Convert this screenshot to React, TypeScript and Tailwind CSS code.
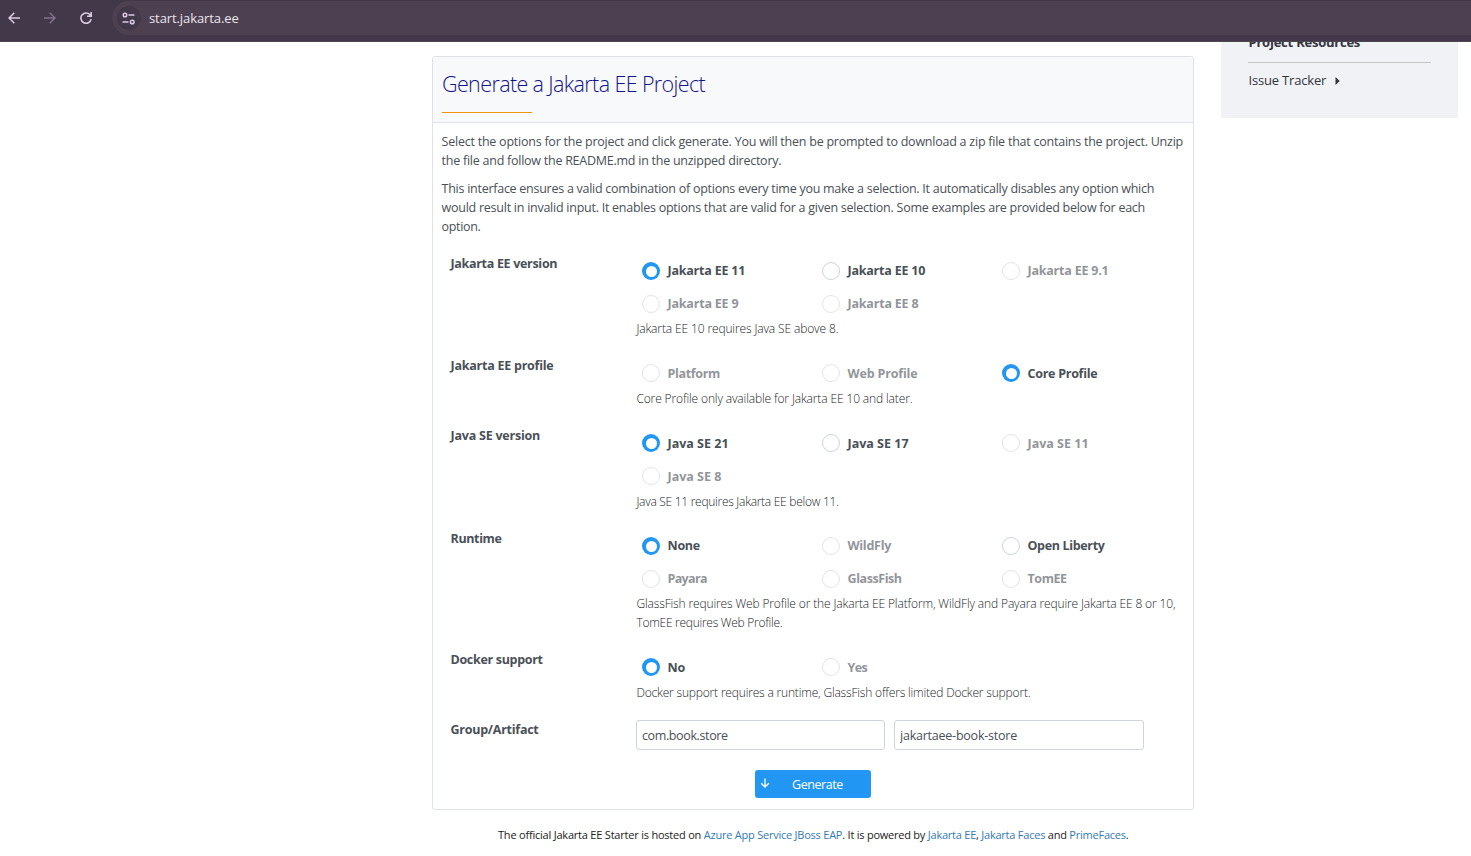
type Option = { label: string; state?: "on" | "off"; tracking?: string };
type Section = {
  label: string;
  tracking: string;
  height: string;
  options: Option[];
  noteHeight: string;
  textPad: string;
  notes: { text: string; tracking: string }[];
};

const sections: Section[] = [
  {
    label: "Jakarta EE version",
    tracking: "tracking-[-0.31px]",
    height: "h-[102px]",
    noteHeight: "h-[65px]",
    textPad: "pt-[2px]",
    options: [
      { label: "Jakarta EE 11", state: "on", tracking: "tracking-[-0.22px]" },
      { label: "Jakarta EE 10", tracking: "tracking-[-0.22px]" },
      { label: "Jakarta EE 9.1", state: "off", tracking: "tracking-[-0.22px]" },
      { label: "Jakarta EE 9", state: "off", tracking: "tracking-[-0.2px]" },
      { label: "Jakarta EE 8", state: "off", tracking: "tracking-[-0.2px]" },
    ],
    notes: [{ text: "Jakarta EE 10 requires Java SE above 8.", tracking: "tracking-[-0.13px]" }],
  },
  {
    label: "Jakarta EE profile",
    tracking: "tracking-[-0.24px]",
    height: "h-[70px]",
    noteHeight: "h-[33px]",
    textPad: "pt-[4px]",
    options: [
      { label: "Platform", state: "off", tracking: "tracking-[-0.34px]" },
      { label: "Web Profile", state: "off", tracking: "tracking-[-0.16px]" },
      { label: "Core Profile", state: "on" },
    ],
    notes: [
      { text: "Core Profile only available for Jakarta EE 10 and later.", tracking: "tracking-[-0.134px]" },
    ],
  },
  {
    label: "Java SE version",
    tracking: "tracking-[-0.22px]",
    height: "h-[103px]",
    noteHeight: "h-[66px]",
    textPad: "pt-[4px]",
    options: [
      { label: "Java SE 21", state: "on", tracking: "tracking-[0px]" },
      { label: "Java SE 17", tracking: "tracking-[0px]" },
      { label: "Java SE 11", state: "off", tracking: "tracking-[0px]" },
      { label: "Java SE 8", state: "off", tracking: "tracking-[0px]" },
    ],
    notes: [{ text: "Java SE 11 requires Jakarta EE below 11.", tracking: "tracking-[-0.28px]" }],
  },
  {
    label: "Runtime",
    tracking: "tracking-[-0.37px]",
    height: "h-[121px]",
    noteHeight: "h-[65px]",
    textPad: "pt-[2px]",
    options: [
      { label: "None", state: "on" },
      { label: "WildFly", state: "off" },
      { label: "Open Liberty", tracking: "tracking-[-0.34px]" },
      { label: "Payara", state: "off", tracking: "tracking-[-0.65px]" },
      { label: "GlassFish", state: "off", tracking: "tracking-[-0.42px]" },
      { label: "TomEE", state: "off", tracking: "tracking-[-0.42px]" },
    ],
    notes: [
      {
        text: "GlassFish requires Web Profile or the Jakarta EE Platform, WildFly and Payara require Jakarta EE 8 or 10,",
        tracking: "tracking-[-0.137px]",
      },
      { text: "TomEE requires Web Profile.", tracking: "tracking-[-0.268px]" },
    ],
  },
  {
    label: "Docker support",
    tracking: "tracking-[-0.31px]",
    height: "h-[70px]",
    noteHeight: "h-[33px]",
    textPad: "pt-[4px]",
    options: [
      { label: "No", state: "on" },
      { label: "Yes", state: "off", tracking: "tracking-[-0.6px]" },
    ],
    notes: [
      {
        text: "Docker support requires a runtime, GlassFish offers limited Docker support.",
        tracking: "tracking-[-0.18px]",
      },
    ],
  },
];

function Radio({ label, state, tracking = "tracking-[-0.27px]", textPad }: Option & { textPad: string }) {
  return (
    <label className={`flex h-[33px] items-center ${state === "off" ? "opacity-60" : ""}`}>
      {state === "on" ? (
        <span className="mt-px flex size-[18px] shrink-0 items-center justify-center rounded-full bg-[#2196f3]">
          <span className="size-[11px] rounded-full bg-white" />
        </span>
      ) : (
        <span className="mt-px size-[18px] shrink-0 rounded-full border border-[#ced4da] bg-white" />
      )}
      <span className={`ml-[7.5px] text-[12.5px] font-bold text-[#495057] ${textPad} ${tracking}`}>{label}</span>
    </label>
  );
}

function BrowserBar() {
  return (
    <header className="flex h-[42px] shrink-0 items-start border-b border-[#4d4850] bg-[#43374a]">
      <div className="flex h-9 w-[112px] shrink-0 items-center">
        <svg className="ml-[8px] size-3" viewBox="0 0 12 12" fill="none" stroke="#dccbe2" strokeWidth="1.5">
          <path d="M12 6H1M6.3 .7 1 6l5.3 5.3" />
        </svg>
        <svg className="ml-[24px] size-3" viewBox="0 0 12 12" fill="none" stroke="#82738a" strokeWidth="1.5">
          <path d="M0 6h11M5.7 .7 11 6l-5.3 5.3" />
        </svg>
        <svg className="ml-[24px] size-3" viewBox="0 0 12 12" fill="none" stroke="#dccbe2" strokeWidth="1.6">
          <path d="M10.4 3.2A5.2 5.2 0 1 0 11.2 7.2M11.2 0v4.2H7" />
        </svg>
      </div>
      <div className="mt-px flex h-[34px] flex-1 items-center rounded-l-full bg-[#4d4050] pl-[5px]">
        <span className="flex size-6 items-center justify-center rounded-full bg-[#43374a]">
          <svg className="-ml-px size-[13px]" viewBox="0 0 13 13" fill="none" stroke="#dccbe2" strokeWidth="1.5">
            <circle cx="3" cy="3" r="1.8" />
            <path d="M6.5 3h6M.5 10h6" />
            <circle cx="10.2" cy="10" r="1.8" />
          </svg>
        </span>
        <span className="ml-2 pt-[2px] text-[13px] tracking-[-0.09px] text-[#ece4ef]">start.jakarta.ee</span>
      </div>
    </header>
  );
}

const field =
  "h-[30px] rounded-[3px] border border-[#ced4da] bg-white pl-[5px] text-[12.5px] text-[#495057] outline-none";

export default function App() {
  return (
    <div className="flex h-[856px] flex-col overflow-hidden bg-white font-['Open_Sans',sans-serif]">
      <BrowserBar />
      <div className="flex min-h-0 flex-1 items-start overflow-hidden">
        <main className="ml-[432px] mt-[14px] w-[762px] shrink-0">
          <section className="h-[754px] rounded-[3px] border border-[#dee2e6]">
            <div className="h-[66px] rounded-t-[2px] border-b border-[#dee2e6] bg-[#f8f9fa] pl-[9px] pt-3">
              <h1 className="text-[21.5px] leading-[30px] font-light tracking-[-0.62px] text-[#14148c]">
                Generate a Jakarta EE Project
              </h1>
              <div className="mt-[13px] h-px w-[90px] bg-[#f0900c]" />
            </div>
            <div className="flex h-[131px] flex-col gap-[9px] whitespace-nowrap pl-[8.6px] pt-[9px] text-[12.5px] leading-[19px] text-[#495057]">
              <p>
                <span className="block tracking-[-0.236px]">
                  Select the options for the project and click generate. You will then be prompted to download a zip file that contains the project. Unzip
                </span>
                <span className="block tracking-[-0.25px]">
                  the file and follow the README.md in the unzipped directory.
                </span>
              </p>
              <p>
                <span className="block tracking-[-0.264px]">
                  This interface ensures a valid combination of options every time you make a selection. It automatically disables any option which
                </span>
                <span className="block tracking-[-0.254px]">
                  would result in invalid input. It enables options that are valid for a given selection. Some examples are provided below for each
                </span>
                <span className="block tracking-[-0.35px]">option.</span>
              </p>
            </div>
            <form className="pl-[17px]">
              {sections.map((s) => (
                <div key={s.label} className={`flex ${s.height}`}>
                  <div className={`w-[186px] pl-[0.5px] text-[12.5px] leading-[20px] font-bold text-[#495057] ${s.tracking}`}>
                    {s.label}
                  </div>
                  <div>
                    <div className={`grid grid-cols-[180px_180px_180px] content-start pl-[6px] ${s.noteHeight}`}>
                      {s.options.map((o) => (
                        <Radio key={o.label} {...o} textPad={s.textPad} />
                      ))}
                    </div>
                    {s.notes.map((n) => (
                      <p
                        key={n.text}
                        className={`whitespace-nowrap pl-[0.4px] text-[12px] leading-[19px] font-light text-[#212529] ${n.tracking}`}
                      >
                        {n.text}
                      </p>
                    ))}
                  </div>
                </div>
              ))}
              <div className="flex h-[50px]">
                <div className="w-[186px] pl-[0.5px] text-[12.5px] leading-[20px] font-bold tracking-[-0.25px] text-[#495057]">
                  Group/Artifact
                </div>
                <input className={`${field} w-[249px] tracking-[-0.38px]`} defaultValue="com.book.store" />
                <input className={`${field} ml-[9px] w-[250px] tracking-[-0.23px]`} defaultValue="jakartaee-book-store" />
              </div>
              <button
                type="button"
                className="ml-[305px] flex h-7 w-[116px] items-center rounded-[3px] bg-[#2196f3] text-[12.5px] text-white"
              >
                <svg className="-mt-[2px] ml-[5px] size-[10px]" viewBox="0 0 10 10" fill="none" stroke="currentColor" strokeWidth="1.3">
                  <path d="M5 .5v8.3M1.2 5.2 5 9l3.8-3.8" />
                </svg>
                <span className="ml-[22px] pt-[2px] tracking-[-0.45px]">Generate</span>
              </button>
            </form>
          </section>
          <footer className="mt-4 whitespace-nowrap pl-[66px] text-[11px] leading-[17px] tracking-[-0.23px] text-[#222]">
            <span className="tracking-[-0.21px]">The official Jakarta EE Starter is hosted on </span>
            <a className="text-[#337ab7]">Azure App Service JBoss EAP</a>. It is powered by{" "}
            <a className="text-[#337ab7]">Jakarta EE</a>, <a className="text-[#337ab7]">Jakarta Faces</a> and{" "}
            <a className="text-[#337ab7]">PrimeFaces</a>.
          </footer>
        </main>
        <aside className="ml-[27px] h-[76px] w-[237px] shrink-0 overflow-hidden bg-[#f0f2f6] px-[27px] text-[13px] text-[#35353d]">
          <h2 className="-mt-[10px] h-[30px] pl-[0.5px] leading-5 font-bold tracking-[-0.23px]">Project Resources</h2>
          <div className="h-px bg-[#c4c4c4]" />
          <a className="mt-2 flex h-5 items-center pl-[0.5px] tracking-[-0.18px]">
            Issue Tracker
            <svg className="ml-[8.5px] h-2 w-[5px]" viewBox="0 0 5 8" fill="currentColor">
              <path d="M.5 0 4.7 4 .5 8z" />
            </svg>
          </a>
        </aside>
      </div>
    </div>
  );
}
